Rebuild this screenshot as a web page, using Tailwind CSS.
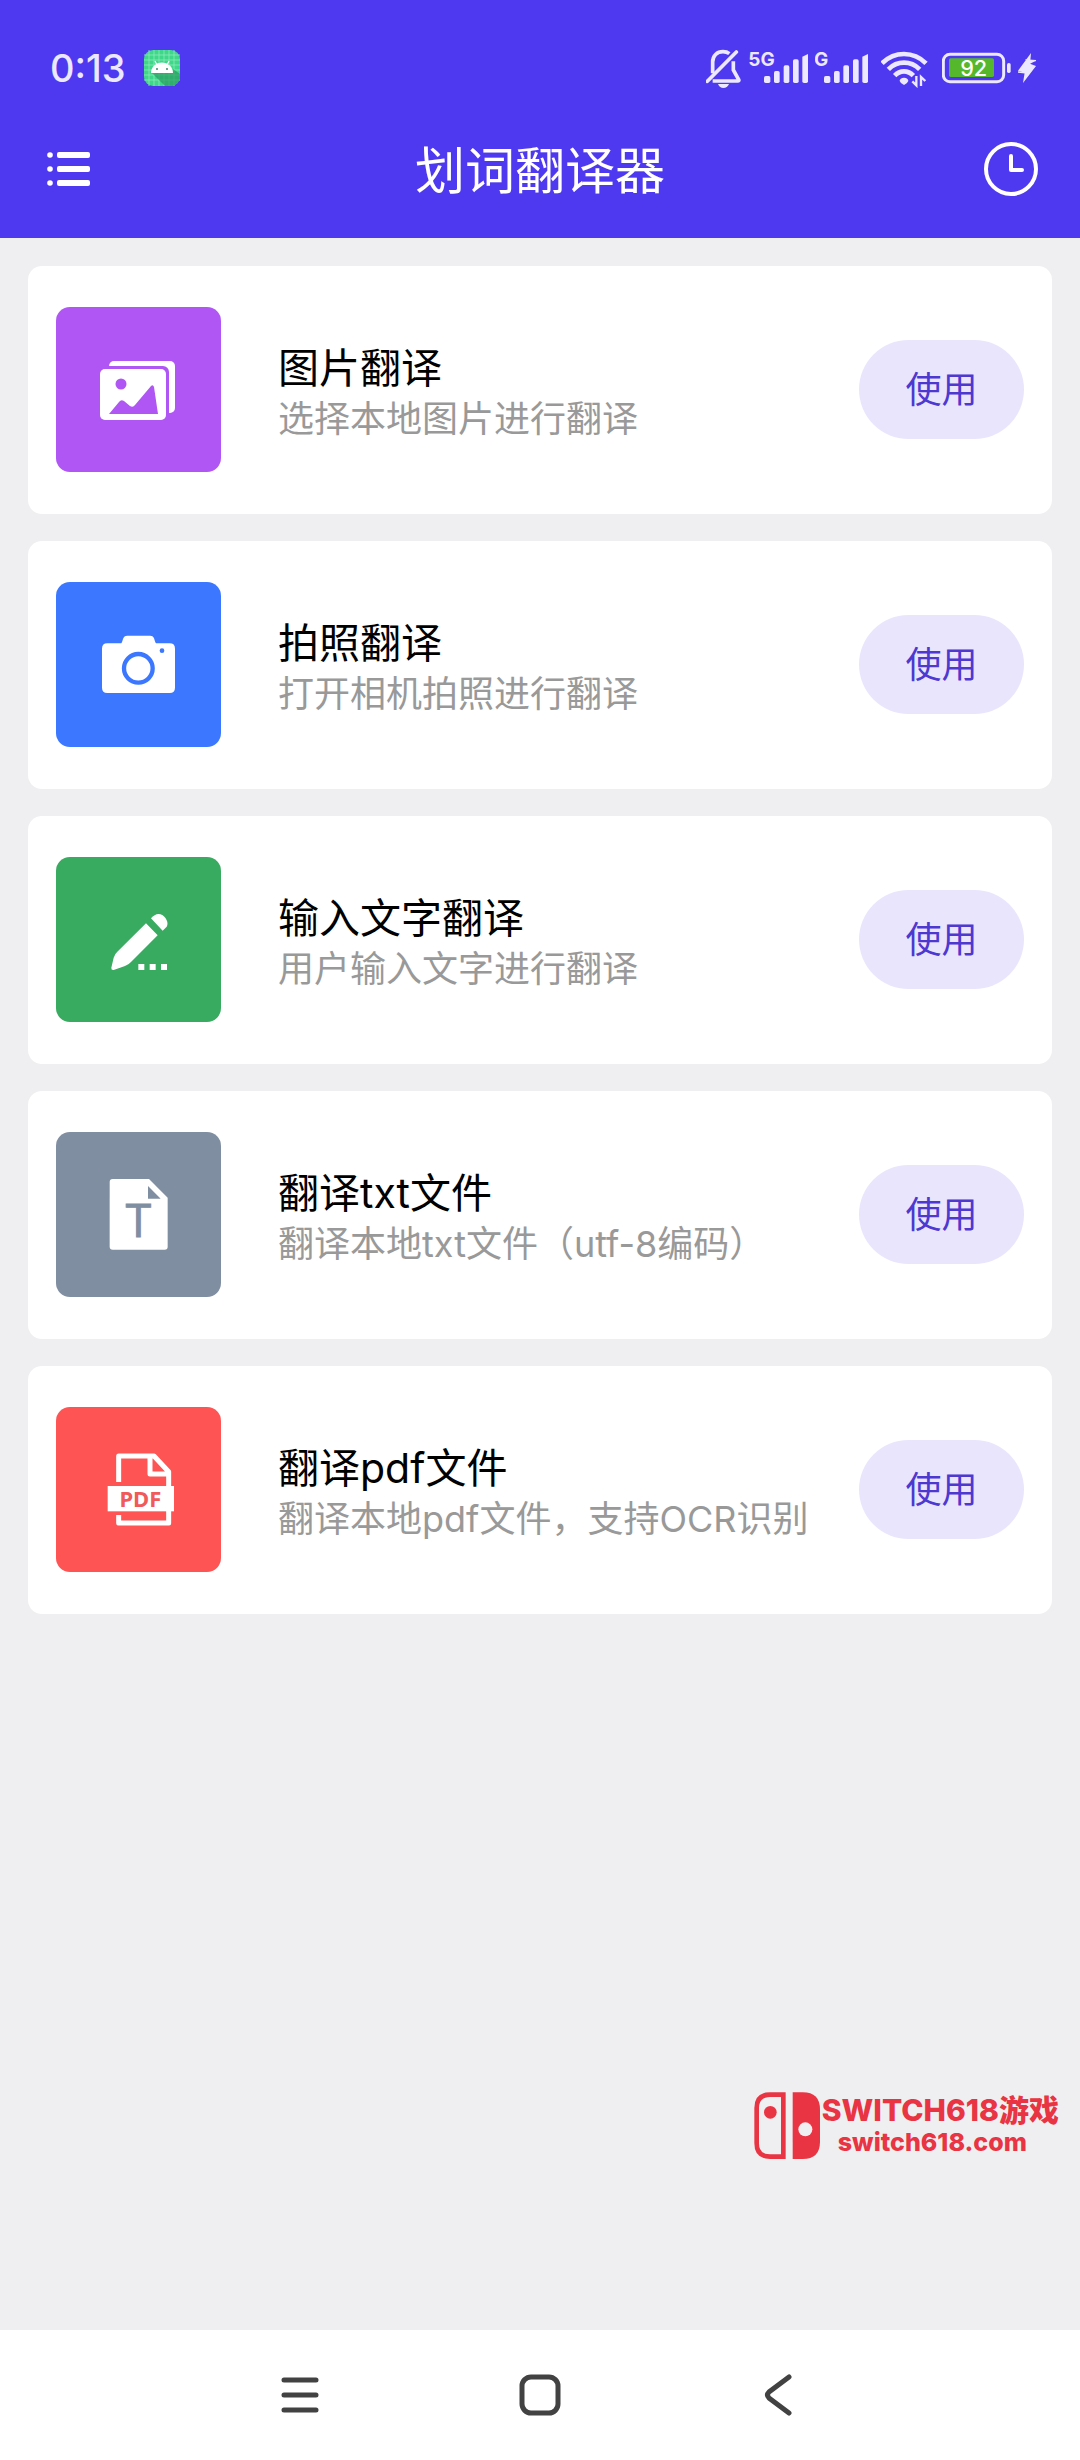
<!DOCTYPE html>
<html lang="zh-CN">
<head>
  <meta charset="UTF-8">
  <meta name="viewport" content="width=device-width, initial-scale=1.0">
  <title>划词翻译器</title>
  <script src="https://cdn.jsdelivr.net/npm/@tailwindcss/browser@4"></script>
</head>
<body class="min-h-screen flex flex-col bg-[#efeff1] font-['Inter','Noto_Sans_CJK_SC',sans-serif]">

  <header class="bg-[#4f39f0] text-white pt-12">
    <!-- Status bar -->
    <div class="flex items-center justify-between h-10 pl-[50px] pr-[43px] text-[#ece8ff]">
      <div class="flex items-center gap-[18px]">
        <span class="text-[38px] leading-10 font-medium">0:13</span>
        <svg class="w-9 h-9" viewBox="0 0 36 36">
          <rect width="36" height="36" rx="9" fill="#3fd88a"/>
          <path d="M5 0v36M10 0v36M15 0v36M20 0v36M25 0v36M30 0v36M0 5h36M0 10h36M0 15h36M0 20h36M0 25h36M0 30h36" stroke="#8debb8" stroke-width=".8"/>
          <path d="M8 23L21 36H27A9 9 0 0 0 36 27V24L29 19Z" fill="#2a9b60" opacity=".7"/>
          <path d="M7 23a11 10.500 0 0 1 22 0Z" fill="#fff"/>
          <path d="M13 15l-2-4M23 15l2-4" stroke="#fff" stroke-width="1.200"/>
          <circle cx="13" cy="19" r="1" fill="#3a8a66"/>
          <circle cx="23" cy="19" r="1" fill="#3a8a66"/>
        </svg>
      </div>
      <div class="flex items-center">
        <!-- Muted bell -->
        <svg class="w-[35px] h-10" viewBox="78 54 105 120" fill="none" stroke="currentColor" stroke-width="11">
          <path d="M98 130V96C98 77 111 65 129 65C137 65 143 67 148 71"/>
          <path d="M160 94V120L176 149Q178 153 173 153H98"/>
          <path d="M82 154L169 66" stroke-linecap="round"/>
          <path d="M114 162H147Q142 174 130 174Q119 174 114 162Z" fill="currentColor" stroke="none"/>
        </svg>
        <!-- SIM 1 -->
        <svg class="w-[60px] h-10 ml-2" viewBox="207 54 180 120" fill="currentColor">
          <text x="205" y="107" font-size="57" font-weight="700">5G</text>
          <rect x="252" y="138" width="19" height="21" rx="5"/>
          <rect x="282" y="123" width="17" height="36" rx="5"/>
          <rect x="311" y="106" width="17" height="53" rx="5"/>
          <rect x="339" y="88" width="17" height="71" rx="5"/>
          <path d="M367 80L384 72V154Q384 159 379 159H372Q367 159 367 154Z"/>
        </svg>
        <!-- SIM 2 -->
        <svg class="w-[54px] h-10 ml-1.5" viewBox="405 54 162 120" fill="currentColor">
          <text x="402" y="107" font-size="57" font-weight="700">G</text>
          <rect x="432" y="138" width="19" height="21" rx="5"/>
          <rect x="462" y="123" width="17" height="36" rx="5"/>
          <rect x="490" y="106" width="17" height="53" rx="5"/>
          <rect x="519" y="88" width="17" height="71" rx="5"/>
          <path d="M547 80L564 72V154Q564 159 559 159H552Q547 159 547 154Z"/>
        </svg>
        <!-- Wi-Fi -->
        <svg class="w-[47px] h-10 ml-3" viewBox="603 54 141 120" fill="none" stroke="currentColor" stroke-width="14">
          <path d="M606 100Q634 72 672 72Q710 72 738 100"/>
          <path d="M625 118Q645 98 672 98Q699 98 719 118"/>
          <path d="M644 137Q656 124 672 124Q688 124 700 137"/>
          <path d="M672 143C680 143 685 148 685 153Q682 161 672 165Q662 161 659 153C659 148 664 143 672 143Z" fill="currentColor" stroke="none"/>
          <path d="M709 138V166L697 154M723 168V141L736 153" stroke-width="7"/>
        </svg>
        <!-- Battery -->
        <svg class="w-[70px] h-10 ml-3.5" viewBox="786 54 210 120">
          <rect x="790" y="73" width="181" height="82" rx="20" fill="none" stroke="currentColor" stroke-width="9"/>
          <rect x="807" y="85" width="135" height="56" rx="5" fill="#55b82c"/>
          <rect x="981" y="99" width="11" height="30" rx="5" fill="currentColor"/>
          <text x="881" y="139" text-anchor="middle" font-size="65" font-weight="500" fill="#fff">92</text>
        </svg>
        <svg class="w-[19px] h-10 ml-1.5" viewBox="1014 54 57 120" fill="currentColor">
          <path d="M1053 69L1014 122L1034 128L1029 159L1068 108L1050 101Z"/>
          <path d="M1068 92L1040 90L1050 101M1014 126L1042 129" stroke="currentColor" stroke-width="4"/>
        </svg>
      </div>
    </div>

    <!-- Title bar -->
    <div class="flex items-center justify-between h-[138px] mt-3 px-[42px]">
      <button type="button" aria-label="菜单" class="w-[54px] h-[54px] flex items-center justify-center">
        <svg class="w-11 h-9" viewBox="0 0 44 36" fill="currentColor">
          <circle cx="3" cy="4" r="2.800"/><rect x="10" y="1" width="33" height="6" rx="2"/>
          <circle cx="3" cy="18" r="2.800"/><rect x="10" y="15" width="33" height="6" rx="2"/>
          <circle cx="3" cy="32" r="2.800"/><rect x="10" y="29" width="33" height="6" rx="2"/>
        </svg>
      </button>
      <h1 class="pt-1 text-[50px] leading-[60px]">划词翻译器</h1>
      <button type="button" aria-label="历史记录">
        <svg class="w-[54px] h-[54px]" viewBox="0 0 54 54" fill="none" stroke="currentColor" stroke-width="4" stroke-linecap="round" stroke-linejoin="round">
          <circle cx="27" cy="27" r="25"/>
          <path d="M27 14V28H38"/>
        </svg>
      </button>
    </div>
  </header>

  <main class="flex-1 flex flex-col px-7 pt-7">
    <ul class="flex flex-col gap-[27px]">
      <li class="flex items-center bg-white rounded-[14px] px-7 pt-[41px] pb-[42px]">
        <svg class="shrink-0 w-[165px] h-[165px] rounded-[14px] bg-[#b056f5]" viewBox="0 0 165 165">
          <rect x="53" y="54" width="66" height="52" rx="5" fill="#fff"/>
          <rect x="42" y="59" width="71" height="56" rx="6" fill="#b056f5"/>
          <rect x="44" y="62" width="66" height="51" rx="5" fill="#fff"/>
          <circle cx="65" cy="77" r="5.500" fill="#b056f5"/>
          <path d="M53 107L63 95Q65 92 68 94L74 99Q77 101 79 98L95 79Q97 77 98 80L102 107Z" fill="#b056f5"/>
        </svg>
        <div class="flex-1 min-w-0 ml-[57px] pt-1">
          <h2 class="text-[41px] leading-[54px] text-black">图片翻译</h2>
          <p class="text-[36px] leading-[48px] text-[#999]">选择本地图片进行翻译</p>
        </div>
        <button type="button" class="shrink-0 w-[165px] h-[99px] rounded-full bg-[#e9e5fd] text-[#4d38d0] text-[36px]">使用</button>
      </li>

      <li class="flex items-center bg-white rounded-[14px] px-7 pt-[41px] pb-[42px]">
        <svg class="shrink-0 w-[165px] h-[165px] rounded-[14px] bg-[#3b78ff]" viewBox="18 36 495 495">
          <path d="M172 220H214C220 212 217 197 232 197H300C315 197 312 212 318 220H359Q375 220 375 236V353Q375 369 359 369H172Q156 369 156 353V236Q156 220 172 220Z" fill="#fff"/>
          <circle cx="265" cy="295" r="43" fill="none" stroke="#3b78ff" stroke-width="13"/>
          <circle cx="336" cy="242" r="7" fill="#3b78ff"/>
        </svg>
        <div class="flex-1 min-w-0 ml-[57px] pt-1">
          <h2 class="text-[41px] leading-[54px] text-black">拍照翻译</h2>
          <p class="text-[36px] leading-[48px] text-[#999]">打开相机拍照进行翻译</p>
        </div>
        <button type="button" class="shrink-0 w-[165px] h-[99px] rounded-full bg-[#e9e5fd] text-[#4d38d0] text-[36px]">使用</button>
      </li>

      <li class="flex items-center bg-white rounded-[14px] px-7 pt-[41px] pb-[42px]">
        <svg class="shrink-0 w-[165px] h-[165px] rounded-[14px] bg-[#38ab60]" viewBox="18 21 495 495" fill="#fff">
          <path d="M288 220L323 256L243 336Q236 344 225 348L191 360Q183 361 184 353L191 323Q194 312 202 305Z"/>
          <path d="M303 205C314 192 326 188 338 196C353 208 355 222 350 230L338 242Z"/>
          <path d="M265 342h18v18h-18zM299 342h18v18h-18zM333 342h18v18h-18z"/>
        </svg>
        <div class="flex-1 min-w-0 ml-[57px] pt-1">
          <h2 class="text-[41px] leading-[54px] text-black">输入文字翻译</h2>
          <p class="text-[36px] leading-[48px] text-[#999]">用户输入文字进行翻译</p>
        </div>
        <button type="button" class="shrink-0 w-[165px] h-[99px] rounded-full bg-[#e9e5fd] text-[#4d38d0] text-[36px]">使用</button>
      </li>

      <li class="flex items-center bg-white rounded-[14px] px-7 pt-[41px] pb-[42px]">
        <svg class="shrink-0 w-[165px] h-[165px] rounded-[14px] bg-[#808ea2]" viewBox="18 36 495 495">
          <path d="M188 177H297L353 233V380Q353 389 344 389H188Q179 389 179 380V186Q179 177 188 177Z" fill="#fff"/>
          <path d="M294 198V236H332Z" fill="#808ea2"/>
          <text x="265" y="350" text-anchor="middle" font-family="Open Sans" font-size="138" font-weight="500" fill="#808ea2" stroke="#808ea2" stroke-width="3">T</text>
        </svg>
        <div class="flex-1 min-w-0 ml-[57px] pt-1">
          <h2 class="text-[41px] leading-[54px] text-black">翻译txt文件</h2>
          <p class="text-[36px] leading-[48px] text-[#999]">翻译本地txt文件（utf-8编码）</p>
        </div>
        <button type="button" class="shrink-0 w-[165px] h-[99px] rounded-full bg-[#e9e5fd] text-[#4d38d0] text-[36px]">使用</button>
      </li>

      <li class="flex items-center bg-white rounded-[14px] px-7 pt-[41px] pb-[42px]">
        <svg class="shrink-0 w-[165px] h-[165px] rounded-[14px] bg-[#fe5454]" viewBox="18 21 495 495">
          <path d="M206 246V168H312L356 215V369H206V345M300 168V222H356" fill="none" stroke="#fff" stroke-width="15" stroke-linejoin="round"/>
          <rect x="173" y="258" width="199" height="76" fill="#fff"/>
          <text x="271" y="320" text-anchor="middle" font-family="Noto Sans" font-size="66" font-weight="700" fill="#f05a5a">PDF</text>
        </svg>
        <div class="flex-1 min-w-0 ml-[57px] pt-1">
          <h2 class="text-[41px] leading-[54px] text-black">翻译pdf文件</h2>
          <p class="text-[36px] leading-[48px] text-[#999]">翻译本地pdf文件，支持OCR识别</p>
        </div>
        <button type="button" class="shrink-0 w-[165px] h-[99px] rounded-full bg-[#e9e5fd] text-[#4d38d0] text-[36px]">使用</button>
      </li>
    </ul>

    <div class="mt-auto mb-[171px] -mr-2 self-end flex items-center gap-0.5 text-[#e93443] font-extrabold">
      <svg class="w-[66px] h-[67px]" viewBox="50 65 198 201">
        <path d="M138 73V259H98Q58 259 58 219V113Q58 73 98 73Z" fill="none" stroke="currentColor" stroke-width="14"/>
        <circle cx="99" cy="126" r="19" fill="currentColor"/>
        <path d="M166 66H196Q248 66 248 118V214Q248 266 196 266H166Z" fill="currentColor"/>
        <circle cx="204" cy="177" r="21" fill="#efeff1"/>
      </svg>
      <div class="pr-px whitespace-nowrap">
        <div class="text-[30px] leading-8">SWITCH618游戏</div>
        <div class="pl-4 text-[25px] leading-8">switch618.com</div>
      </div>
    </div>
  </main>

  <!-- System navigation -->
  <nav class="h-[130px] bg-white flex items-center justify-center gap-40 text-[#424242]">
    <button type="button" aria-label="最近任务" class="w-20 h-20 flex items-center justify-center">
      <svg class="w-10 h-10" viewBox="0 0 40 40" stroke="currentColor" stroke-width="5" stroke-linecap="round">
        <path d="M4 5H36M4 20H36M4 35H36"/>
      </svg>
    </button>
    <button type="button" aria-label="主页" class="w-20 h-20 flex items-center justify-center">
      <svg class="w-[42px] h-[42px]" viewBox="0 0 42 42" fill="none" stroke="currentColor" stroke-width="5">
        <rect x="3" y="3" width="36" height="36" rx="9"/>
      </svg>
    </button>
    <button type="button" aria-label="返回" class="w-20 h-20 flex items-center justify-center">
      <svg class="w-[42px] h-[42px]" viewBox="0 0 42 42" fill="none" stroke="currentColor" stroke-width="5" stroke-linecap="round">
        <path d="M30 3L10 18Q7 21 10 24L30 39"/>
      </svg>
    </button>
  </nav>

</body>
</html>
